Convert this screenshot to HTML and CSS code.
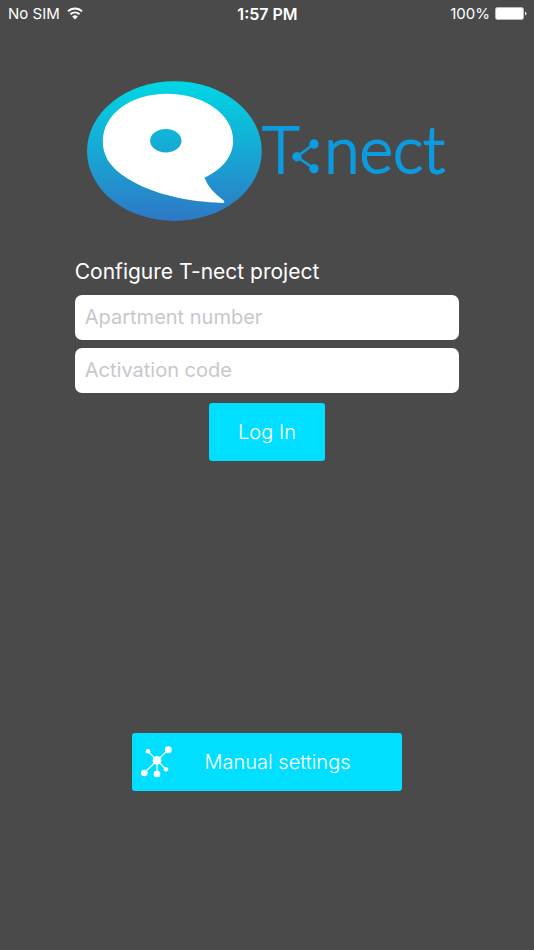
FILE: index.html
```html
<!DOCTYPE html>
<html lang="en">
<head>
    <meta charset="UTF-8">
    <meta name="viewport" content="width=device-width, initial-scale=1">
    <title>T-nect</title>
    <link rel="stylesheet" href="styles.css">
</head>
<body>
    <header class="status-bar">
        <div class="status-left">
            <span>No SIM</span>
            <svg class="wifi" width="16" height="14" viewBox="0 0 16 14">
                <path d="M1 4.4a10 10 0 0 1 14 0M3.5 7.2a6.4 6.4 0 0 1 9 0" fill="none" stroke="#fff" stroke-width="1.9"/>
                <path d="M8 12.5 5.2 9.7a4 4 0 0 1 5.6 0z" fill="#fff"/>
            </svg>
        </div>
        <div class="status-time">1:57 PM</div>
        <div class="status-right">
            <span>100%</span>
            <svg width="32" height="13" viewBox="0 0 32 13">
                <rect x="0.5" y="0.5" width="28" height="12" rx="2" fill="#fff" stroke="#bbb"/>
                <path d="M30 4.5q3 2 0 4z" fill="#fff"/>
            </svg>
        </div>
    </header>

    <main>
        <svg class="logo" viewBox="-1 0 361 140" role="img" aria-label="T-nect">
            <defs>
                <linearGradient id="logoFill" x1="0" y1="0" x2="0" y2="140" gradientUnits="userSpaceOnUse">
                    <stop offset="0" stop-color="#00d8e4"/>
                    <stop offset="1" stop-color="#2e78c5"/>
                </linearGradient>
            </defs>
            <ellipse cx="87.3" cy="70" rx="87.3" ry="69.8" fill="url(#logoFill)"/>
            <path d="M80 12.8C44 12.8 15.8 33 15.8 60.5C15.8 78 27 89.5 43 99C66 113 101 121 135 121.8Q138.5 121.5 136.5 119.3Q122 109 117.3 96.7C134 89 146 76 146 59.5C146 33 116 12.8 80 12.8Z" fill="#fff"/>
            <ellipse cx="78.7" cy="59.7" rx="15.7" ry="11.7" fill="url(#logoFill)"/>
            <text class="logo-text" x="175" y="92">T</text>
            <path d="M226.7 63 209.7 75.7l17 11.8" fill="none" stroke="#0a9be0" stroke-width="2.6"/>
            <g fill="#0a9be0">
                <circle cx="209.7" cy="75.7" r="4.7"/>
                <circle cx="226.7" cy="63" r="4.7"/>
                <circle cx="226.7" cy="87.5" r="4.7"/>
            </g>
            <text class="logo-text" x="237" y="92">nect</text>
        </svg>

        <form class="login-form">
            <h1>Configure T-nect project</h1>
            <input type="text" name="apartment" placeholder="Apartment number" aria-label="Apartment number">
            <input type="text" name="code" placeholder="Activation code" aria-label="Activation code">
            <button type="submit" class="btn btn-login">Log In</button>
        </form>

        <button type="button" class="btn btn-manual">
            <svg width="32" height="32" viewBox="0 0 32 32">
                <path d="M7 5.3 25 23.3M27.3 3.7 3 27M16 14.3V28" stroke="#fff" stroke-width="1.2"/>
                <g fill="#fff">
                    <circle cx="16" cy="14.3" r="4.4"/>
                    <circle cx="7" cy="5.3" r="2.3"/>
                    <circle cx="27.3" cy="3.7" r="3.5"/>
                    <circle cx="3.3" cy="27" r="3.3"/>
                    <circle cx="16" cy="28" r="3.3"/>
                    <circle cx="25" cy="23.3" r="2.3"/>
                </g>
            </svg>
            <span>Manual settings</span>
        </button>
    </main>
</body>
</html>
```
FILE: styles.css
```css
* {
    box-sizing: border-box;
}
body {
    margin: 0;
    min-height: 100vh;
    display: flex;
    flex-direction: column;
    background-color: #4a4a4a;
    color: #fff;
    font-family: Inter, "Liberation Sans", sans-serif;
}
.status-bar {
    display: grid;
    grid-template-columns: 1fr auto 1fr;
    align-items: center;
    height: 27px;
    padding: 0 7px 0 8px;
    font-size: 15px;
}
.status-left, .status-right {
    display: flex;
    align-items: center;
    gap: 5px;
}
.status-left {
    gap: 7px;
}
.status-right {
    justify-content: flex-end;
}
.status-time {
    font-size: 16px;
    font-weight: 600;
}
main {
    flex: 1;
    width: 72%;
    margin: 0 auto;
    padding: 54px 0 159px;
    display: flex;
    flex-direction: column;
    align-items: center;
}
.logo {
    width: 94%;
}
.logo-text {
    font-family: Lato, sans-serif;
    font-size: 64px;
    font-weight: 300;
    fill: #0a9be0;
    stroke: #0a9be0;
    stroke-width: 2px;
}
.login-form {
    width: 100%;
    margin-top: 36px;
    display: flex;
    flex-direction: column;
    gap: 8px;
}
h1 {
    margin: 0;
    font-size: 21px;
    line-height: 30px;
    font-weight: 400;
}
input {
    width: 100%;
    height: 45px;
    padding: 0 10px 2px;
    border: none;
    border-radius: 7px;
    background-color: #fff;
    color: #333;
    font-family: inherit;
    font-size: 20px;
}
input::placeholder {
    color: #c7c7cd;
    opacity: 1;
}
.btn {
    height: 58px;
    border: none;
    border-radius: 3px;
    background-color: #00dfff;
    color: #fff;
    font-family: inherit;
    font-size: 20px;
    font-weight: 300;
    cursor: pointer;
}
.btn-login {
    align-self: center;
    margin-top: 2px;
    padding: 0 29px;
}
.btn-manual {
    display: flex;
    align-items: center;
    gap: 31px;
    margin-top: auto;
    padding: 0 51px 0 9px;
}
```
